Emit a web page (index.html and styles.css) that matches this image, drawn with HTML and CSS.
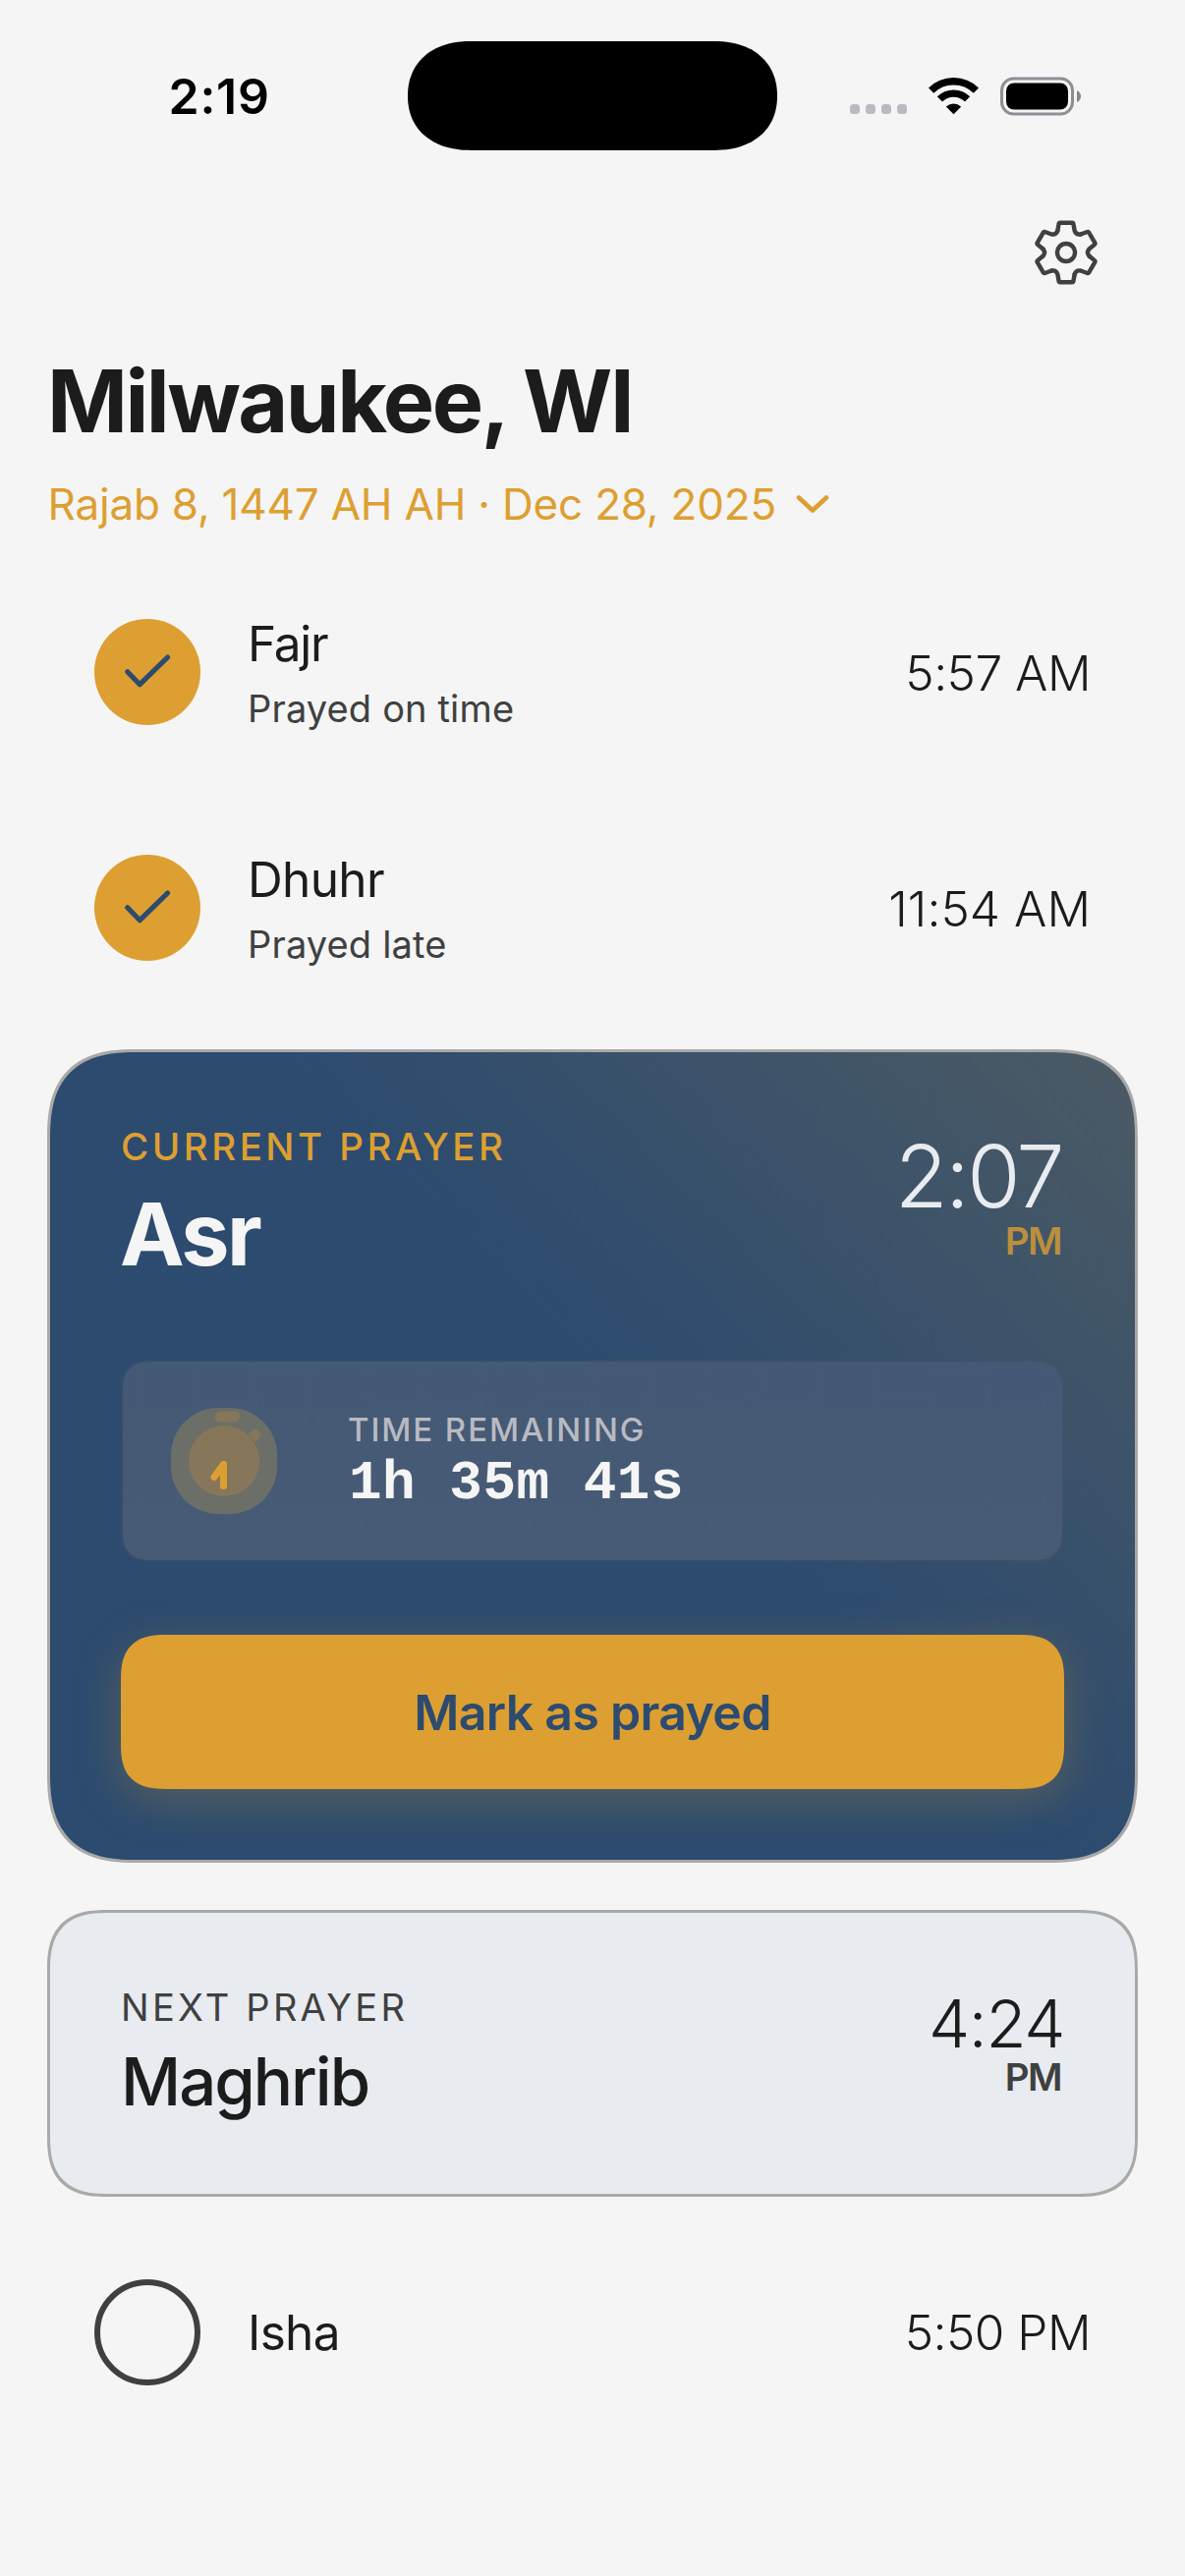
FILE: index.html
```html
<!DOCTYPE html>
<html lang="en">
<head>
<meta charset="utf-8">
<title>Prayer Times</title>
<link rel="stylesheet" href="styles.css">
</head>
<body>
<div class="screen">
  <header class="status">
    <div class="status-time">2:19</div>
    <div class="island"></div>
    <div class="status-icons">
      <div class="signal"><i></i><i></i><i></i><i></i></div>
      <svg class="wifi" width="51" height="38" viewBox="0 0 51 38" fill="none" stroke="#000">
        <path d="M2.6 13.2 A32.5 32.5 0 0 1 48.4 13.2" stroke-width="7.4"/>
        <path d="M11.4 21.9 A20 20 0 0 1 39.6 21.9" stroke-width="7.4"/>
        <path d="M17.8 29.6 Q25.5 23.2 33.2 29.6 L25.5 37.2 Z" fill="#000" stroke="none"/>
      </svg>
      <svg class="battery" width="83" height="40" viewBox="0 0 83 40">
        <rect x="1.5" y="2" width="72" height="36" rx="12" fill="none" stroke="#8b9095" stroke-width="3"/>
        <rect x="6" y="6.5" width="63" height="27" rx="8" fill="#000"/>
        <path d="M78 14 Q82 16 82 20 Q82 24 78 26 Z" fill="#85888a"/>
      </svg>
    </div>
  </header>

  <div class="toolbar">
    <svg class="gear" width="66" height="66" viewBox="-33 -33 66 66" fill="none" stroke="#3f4040" stroke-width="4.4" stroke-linejoin="round" stroke-linecap="round">
      <defs><path id="tooth" d="M-8.7 -22 L-7.4 -29.2 Q-7.2 -30.3 -6.1 -30.3 L6.1 -30.3 Q7.2 -30.3 7.4 -29.2 L8.7 -22 Q10.2 -17.8 14.7 -18.5"/></defs>
      <use href="#tooth"/>
      <use href="#tooth" transform="rotate(60)"/>
      <use href="#tooth" transform="rotate(120)"/>
      <use href="#tooth" transform="rotate(180)"/>
      <use href="#tooth" transform="rotate(240)"/>
      <use href="#tooth" transform="rotate(300)"/>
      <circle r="9"/>
    </svg>
  </div>

  <h1 class="city">Milwaukee, WI</h1>
  <div class="date">
    <span>Rajab 8, 1447 AH AH · Dec 28, 2025</span>
    <svg width="34" height="20" viewBox="0 0 34 20" fill="none" stroke="#dd9f31" stroke-width="4.6" stroke-linecap="round" stroke-linejoin="round"><path d="M3 3.5 L17 16.5 L31 3.5"/></svg>
  </div>

  <main class="list">
    <section class="row">
      <div class="mark done"><svg width="108" height="108" viewBox="0 0 108 108"><path d="M33.7 53.8 L46.3 66.7 L74.6 39"/></svg></div>
      <div class="row-text">
        <div class="row-name fajr">Fajr</div>
        <div class="row-sub">Prayed on time</div>
      </div>
      <div class="row-time">5:57 AM</div>
    </section>
    <section class="row">
      <div class="mark done"><svg width="108" height="108" viewBox="0 0 108 108"><path d="M33.7 53.8 L46.3 66.7 L74.6 39"/></svg></div>
      <div class="row-text">
        <div class="row-name">Dhuhr</div>
        <div class="row-sub">Prayed late</div>
      </div>
      <div class="row-time late-morning">11:54 AM</div>
    </section>

    <section class="card current">
      <div class="card-head">
        <div>
          <div class="label gold">CURRENT PRAYER</div>
          <div class="current-name">Asr</div>
        </div>
        <div class="when">
          <div class="current-time">2:07</div>
          <div class="ampm gold-dim">PM</div>
        </div>
      </div>
      <div class="remaining">
        <svg width="108" height="108" viewBox="0 0 108 108">
          <rect class="timer-bg" width="108" height="108" rx="48"/>
          <g class="timer-body">
            <rect x="45" y="3.5" width="25" height="11" rx="5"/>
            <path d="M79 27 L83 23 A5 5 0 0 1 90 30 L86 35 Z"/>
            <circle cx="54" cy="54" r="36"/>
          </g>
          <path class="timer-hands" d="M53.5 79.5 V57.5 L44 70.5"/>
        </svg>
        <div>
          <div class="remaining-label">TIME REMAINING</div>
          <div class="remaining-value">1h 35m 41s</div>
        </div>
      </div>
      <button class="cta">Mark as prayed</button>
    </section>

    <section class="card next">
      <div class="card-head">
        <div>
          <div class="label">NEXT PRAYER</div>
          <div class="next-name">Maghrib</div>
        </div>
        <div class="when">
          <div class="next-time">4:24</div>
          <div class="ampm">PM</div>
        </div>
      </div>
    </section>

    <section class="row upcoming">
      <div class="mark"></div>
      <div class="row-name">Isha</div>
      <div class="row-time">5:50 PM</div>
    </section>
  </main>
</div>
</body>
</html>
```
FILE: styles.css
```css
* { box-sizing: border-box; }
body {
  margin: 0;
  background: #f5f5f5;
  color: #1c1c1c;
  font-family: Inter, "Liberation Sans", sans-serif;
}
svg { display: block; flex: none; }
.screen { width: 1206px; height: 2622px; padding-top: 42px; overflow: hidden; }

.status { display: grid; grid-template-columns: 415px 376px 415px; height: 111px; align-items: center; }
.status-time { padding-left: 171.5px; font-size: 50px; font-weight: 600; line-height: 60px; letter-spacing: .75px; color: #000; }
.island { height: 111px; border-radius: 64px / 55.5px; corner-shape: superellipse(1.15); background: #000; }
.status-icons { display: flex; align-items: center; padding-left: 74px; }
.signal { display: flex; gap: 6px; padding-top: 27px; margin-right: 22px; }
.signal i { width: 10px; height: 10px; border-radius: 3.5px; background: #b9bbc1; }
.wifi { margin-right: 22px; }

.toolbar { display: flex; justify-content: flex-end; margin-top: 71px; padding-right: 88px; }

.city { margin: 65px 0 0 48px; font-size: 88px; font-weight: 700; line-height: 106px; letter-spacing: -2.5px; }
.date { display: flex; align-items: center; gap: 20px; margin: 25px 0 0 48.5px; font-size: 44px; line-height: 54px; letter-spacing: -.19px; color: #dd9f31; }

.list { display: flex; flex-direction: column; gap: 48px; padding: 48px 48px 0; }
.row { display: flex; align-items: center; height: 192px; padding: 0 48px; }
.row.upcoming { height: 180px; }
.mark { flex: none; width: 108px; height: 108px; margin-right: 48px; border: 6px solid #3f4040; border-radius: 50%; }
.mark.done { border: 0; background: #dd9f31; }
.mark path { fill: none; stroke: #2c4b6f; stroke-width: 5.2; stroke-linecap: round; stroke-linejoin: round; }
.row-text { padding-top: 2px; }
.row-name { font-size: 49.5px; line-height: 60px; letter-spacing: -.65px; }
.row-name.fajr { letter-spacing: -1.27px; }
.row-sub { margin-top: 13px; font-size: 38px; line-height: 47px; letter-spacing: .15px; color: #3f4040; }
.row-time { margin-left: auto; font-size: 49.5px; font-weight: 300; line-height: 60px; letter-spacing: -.5px; padding-top: 2px; }
.upcoming .row-time { padding-top: 0; }
.row-time.late-morning { letter-spacing: .05px; }

.card { border: 3px solid #a9a9a9; padding: 73px 72px 0; corner-shape: superellipse(1.4); }
.card-head { display: flex; justify-content: space-between; }
.label { font-size: 38px; line-height: 46px; letter-spacing: 3.25px; color: #3f4040; }
.label.gold { font-size: 38.5px; font-weight: 500; letter-spacing: 3.5px; color: #dd9f31; }
.when { display: flex; flex-direction: column; align-items: flex-end; }
.ampm { padding-right: 3px; font-size: 38.5px; font-weight: 600; line-height: 42px; letter-spacing: -1.6px; color: #3f4040; }
.ampm.gold-dim { color: #ba8f3d; }

.current {
  height: 828px;
  border-radius: 92px;
  background: linear-gradient(225deg, rgba(221, 159, 49, .18), rgba(221, 159, 49, 0) 46%) border-box, #2c4b6f;
}
.current-name { margin: 13px 0 0 -1px; font-size: 88px; font-weight: 700; line-height: 106px; letter-spacing: -2.5px; color: #f5f5f5; }
.current-time { margin-top: 8px; padding-right: 2px; font-size: 88px; font-weight: 300; line-height: 90px; letter-spacing: -2.6px; color: #e8ebf0; }

.remaining {
  display: flex;
  align-items: center;
  gap: 72px;
  height: 206px;
  margin-top: 75px;
  padding-left: 49px;
  border: 2px solid rgba(75, 85, 100, .35);
  border-radius: 32px;
  corner-shape: superellipse(1.4);
  background: linear-gradient(#445975, #475b75) padding-box;
}
.timer-bg { fill: #6b6f68; }
.timer-body { fill: #86775a; }
.timer-hands { fill: none; stroke: #dd9f31; stroke-width: 7; stroke-linecap: round; stroke-linejoin: round; }
.remaining-label { font-size: 33px; font-weight: 500; line-height: 40px; letter-spacing: 1.9px; color: #b9bac2; padding-top: 2px; }
.remaining-value { margin-top: 3px; padding-left: 1px; font-family: "Liberation Mono", monospace; font-size: 56px; font-weight: 700; line-height: 64px; letter-spacing: .5px; color: #f5f5f5; white-space: pre; }

.cta {
  display: block;
  width: 100%;
  height: 157px;
  margin-top: 74px;
  padding: 0;
  border: 0;
  border-radius: 46px;
  corner-shape: superellipse(1.4);
  background: #dd9f31;
  box-shadow: 0 12px 48px rgba(221, 159, 49, .25);
  font: 600 50px/60px Inter, "Liberation Sans", sans-serif;
  letter-spacing: -.68px;
  color: #2c4b6f;
}

.next { height: 292px; border-radius: 62px; background: #e8ebf0; }
.next-name { margin-top: 13px; font-size: 67px; font-weight: 500; line-height: 80px; letter-spacing: -2px; }
.next-time { font-size: 67px; font-weight: 300; line-height: 80px; letter-spacing: -1.3px; }
.next .ampm { margin-top: -7px; }
```
